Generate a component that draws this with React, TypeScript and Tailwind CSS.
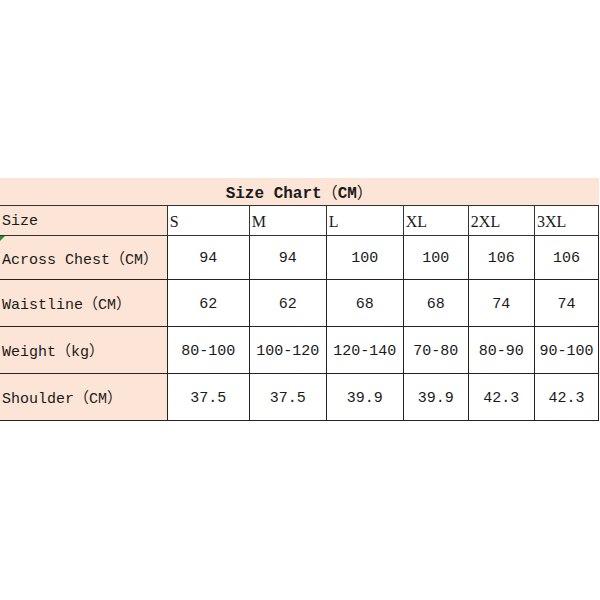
import type { ReactNode } from 'react'

const SIZES = ['S', 'M', 'L', 'XL', '2XL', '3XL']
const WIDTHS = ['w-[167px]', 'w-[82px]', 'w-[77px]', 'w-[77px]', 'w-[65px]', 'w-[66px]', 'w-[64px]']

const ROWS: { label: string; unit: string; values: string[]; h: string }[] = [
  { label: 'Across Chest', unit: 'CM', values: ['94', '94', '100', '100', '106', '106'], h: 'h-[44px]' },
  { label: 'Waistline', unit: 'CM', values: ['62', '62', '68', '68', '74', '74'], h: 'h-[47px]' },
  { label: 'Weight', unit: 'kg', values: ['80-100', '100-120', '120-140', '70-80', '80-90', '90-100'], h: 'h-[47px]' },
  { label: 'Shoulder', unit: 'CM', values: ['37.5', '37.5', '39.9', '39.9', '42.3', '42.3'], h: 'h-[47px]' },
]

const mono = "font-['Liberation_Mono',monospace]"

// full-width parens, the way the spreadsheet shows them
function Unit({ children }: { children: ReactNode }) {
  return (
    <>
      <span className="font-['Noto_Sans_CJK_SC',sans-serif] font-normal">（</span>
      {children}
      <span className="font-['Noto_Sans_CJK_SC',sans-serif] font-normal">）</span>
    </>
  )
}

export default function App() {
  return (
    <div className="min-h-[600px] w-[600px] bg-white pt-[178px] text-[15px] text-[#1a1a1a]">
      <table className={`w-[599px] table-fixed border-collapse ${mono}`}>
        <colgroup>
          {WIDTHS.map((w, i) => (
            <col key={i} className={w} />
          ))}
        </colgroup>
        <tbody>
          <tr className="h-[27px] bg-[#fce4d6]">
            <td colSpan={7} className="border-b border-[#333] pt-[3px] text-center text-[16px] font-bold leading-none">
              Size Chart<Unit>CM</Unit>
            </td>
          </tr>
          <tr className="h-[30px]">
            <td className="border-r border-b border-[#333] bg-[#fce4d6] pt-[3px] pl-[2px] leading-none">Size</td>
            {SIZES.map((s) => (
              <td
                key={s}
                className="border-r border-b border-[#333] pt-[3px] pl-[2px] font-['Liberation_Serif',serif] text-[16px] leading-none"
              >
                {s}
              </td>
            ))}
          </tr>
          {ROWS.map((row, ri) => (
            <tr key={row.label} className={row.h}>
              <td className="relative border-r border-b border-[#222] bg-[#fce4d6] pt-[3px] pl-[2px] leading-none whitespace-nowrap">
                {ri === 0 && (
                  <span className="absolute top-0 left-0 h-0 w-0 border-t-[5px] border-r-[5px] border-t-[#2e8b2e] border-r-transparent" />
                )}
                {row.label}
                <Unit>{row.unit}</Unit>
              </td>
              {row.values.map((v, i) => (
                <td key={i} className="border-r border-b border-[#222] pt-[3px] text-center leading-none whitespace-nowrap">
                  {v}
                </td>
              ))}
            </tr>
          ))}
        </tbody>
      </table>
    </div>
  )
}
